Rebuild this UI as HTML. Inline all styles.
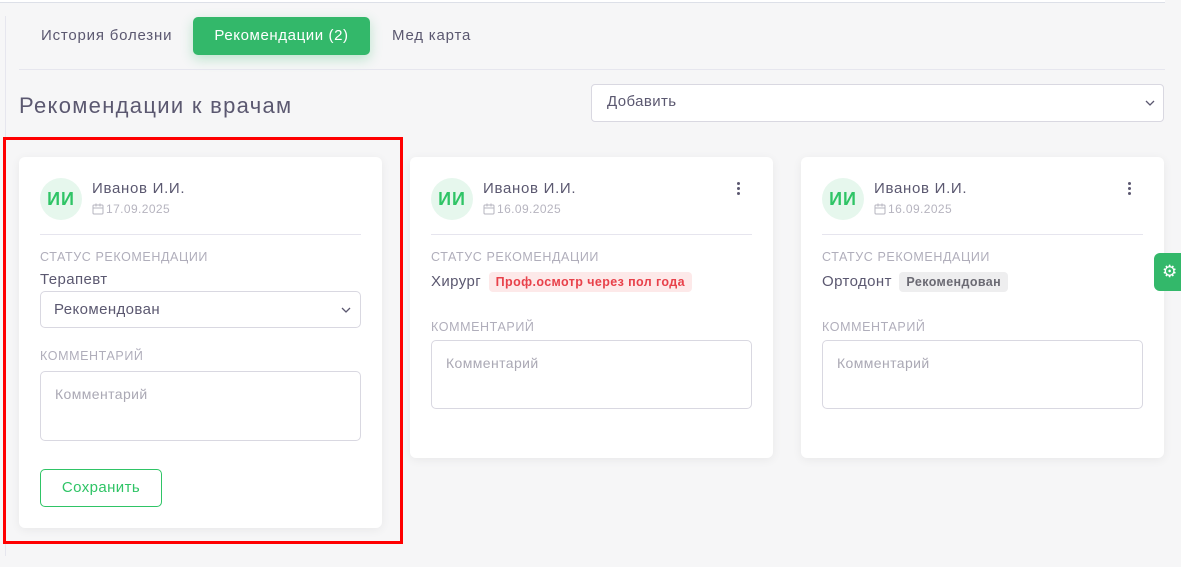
<!DOCTYPE html>
<html><head><meta charset="utf-8"><style>
*{box-sizing:border-box;margin:0;padding:0}
body{width:1181px;height:567px;background:#f6f6f7;font-family:"Liberation Sans",sans-serif;position:relative;overflow:hidden;color:#5b5870;letter-spacing:.4px}
.a{position:absolute}
.card{position:absolute;background:#fff;border-radius:6px;box-shadow:0 2px 10px rgba(0,0,0,.06)}
.av{position:absolute;left:21px;top:21px;width:42px;height:42px;border-radius:50%;background:#e6f7ed;color:#2fc466;font-weight:bold;font-size:18px;text-align:center;line-height:42px;letter-spacing:1px}
.nm{position:absolute;left:73px;top:23px;font-size:15px;color:#5b5870;letter-spacing:.7px}
.dt{position:absolute;left:73px;top:45px;font-size:12px;color:#b6b4bf}
.dt svg{vertical-align:-2px;margin-right:2px}
.hr{position:absolute;left:21px;right:21px;top:77px;border-top:1px solid #e6e5ee}
.lbl{position:absolute;left:21px;font-size:12.5px;color:#b0aebb;letter-spacing:.6px}
.in{position:absolute;left:21px;right:21px;border:1px solid #d9d8e1;border-radius:5px;font-size:14px;color:#aaa8b4;padding:14px}
.dots{position:absolute;right:33px;top:25px;width:3px}
.dots i{display:block;width:3px;height:3px;border-radius:50%;background:#5b5870;margin-bottom:2px}
</style></head><body>
<div class="a" style="left:0;top:0;width:1165px;height:3px;background:#fff;border-bottom:1px solid #dde0e8"></div>
<div class="a" style="left:5px;top:16px;width:1px;height:540px;background:#e6e6ee"></div>
<div class="a" style="left:41px;top:27px;font-size:15px;letter-spacing:.8px">История болезни</div>
<div class="a" style="left:193px;top:17px;width:177px;height:38px;background:#33b86a;border-radius:5px;color:#fff;font-size:15px;text-align:center;line-height:38px;box-shadow:0 4px 12px rgba(51,184,106,.3);letter-spacing:.6px">Рекомендации (2)</div>
<div class="a" style="left:392px;top:27px;font-size:15px;letter-spacing:.8px">Мед карта</div>
<div class="a" style="left:19px;top:69px;width:1146px;border-top:1px solid #e6e6ee"></div>
<div class="a" style="left:19px;top:93px;font-size:22px;color:#5b5870;letter-spacing:1.3px">Рекомендации к врачам</div>
<div class="a" style="left:591px;top:84px;width:573px;height:38px;background:#fff;border:1px solid #d9d8e1;border-radius:4px;font-size:15px;padding:8px 15px">Добавить<svg style="position:absolute;right:8px;top:15px" width="10" height="7"><path d="M1 1l4 4 4-4" stroke="#5b5870" fill="none" stroke-width="1.3"/></svg></div>

<div class="card" style="left:19px;top:157px;width:363px;height:371px">
<div class="av">ИИ</div><div class="nm">Иванов И.И.</div><div class="dt"><svg width="12" height="12"><rect x="1" y="2" width="10" height="9" rx="1" fill="none" stroke="#b6b4bf"/><path d="M1 5h10M4 0.5v3M8 0.5v3" stroke="#b6b4bf"/></svg>17.09.2025</div><div class="hr"></div>
<div class="lbl" style="top:93px">СТАТУС РЕКОМЕНДАЦИИ</div>
<div class="a" style="left:21px;top:114px;font-size:15px">Терапевт</div>
<div class="in" style="top:134px;height:37px;padding:9px 13px;color:#5b5870;font-size:15px">Рекомендован<svg style="position:absolute;right:9px;top:15px" width="10" height="7"><path d="M1 1l4 4 4-4" stroke="#5b5870" fill="none" stroke-width="1.3"/></svg></div>
<div class="lbl" style="top:192px">КОММЕНТАРИЙ</div>
<div class="in" style="top:214px;height:70px;padding:14px 14px">Комментарий</div>
<div class="a" style="left:21px;top:312px;width:122px;height:38px;border:1px solid #2fc466;border-radius:5px;color:#2fc466;font-size:15px;text-align:center;line-height:36px">Сохранить</div>
</div>
<div class="a" style="left:3px;top:137px;width:400px;height:407px;border:3px solid #f00"></div>

<div class="card" style="left:410px;top:157px;width:363px;height:301px">
<div class="av">ИИ</div><div class="nm">Иванов И.И.</div><div class="dt"><svg width="12" height="12"><rect x="1" y="2" width="10" height="9" rx="1" fill="none" stroke="#b6b4bf"/><path d="M1 5h10M4 0.5v3M8 0.5v3" stroke="#b6b4bf"/></svg>16.09.2025</div><div class="dots"><i></i><i></i><i></i></div><div class="hr"></div>
<div class="lbl" style="top:93px">СТАТУС РЕКОМЕНДАЦИИ</div>
<div class="a" style="left:21px;top:115px;font-size:15px">Хирург <span style="display:inline-block;background:#fde9e9;color:#e8414a;font-size:12.5px;font-weight:bold;padding:3px 7px;border-radius:4px;margin-left:3px">Проф.осмотр через пол года</span></div>
<div class="lbl" style="top:163px">КОММЕНТАРИЙ</div>
<div class="in" style="top:183px;height:69px">Комментарий</div>
</div>

<div class="card" style="left:801px;top:157px;width:363px;height:301px">
<div class="av">ИИ</div><div class="nm">Иванов И.И.</div><div class="dt"><svg width="12" height="12"><rect x="1" y="2" width="10" height="9" rx="1" fill="none" stroke="#b6b4bf"/><path d="M1 5h10M4 0.5v3M8 0.5v3" stroke="#b6b4bf"/></svg>16.09.2025</div><div class="dots"><i></i><i></i><i></i></div><div class="hr"></div>
<div class="lbl" style="top:93px">СТАТУС РЕКОМЕНДАЦИИ</div>
<div class="a" style="left:21px;top:115px;font-size:15px">Ортодонт <span style="display:inline-block;background:#eeeeef;color:#6b6a73;font-size:12.5px;font-weight:bold;padding:3px 7px;border-radius:4px;margin-left:3px">Рекомендован</span></div>
<div class="lbl" style="top:163px">КОММЕНТАРИЙ</div>
<div class="in" style="top:183px;height:69px">Комментарий</div>
</div>

<div class="a" style="left:1154px;top:253px;width:30px;height:38px;background:#33b86a;border-radius:6px 0 0 6px;color:#fff;font-size:17px;line-height:38px;padding-left:8px">⚙</div>
</body></html>
